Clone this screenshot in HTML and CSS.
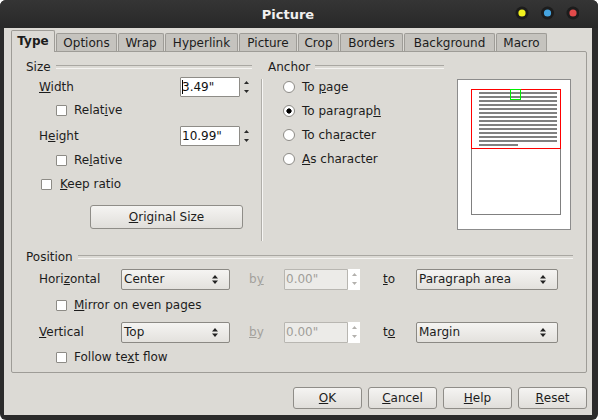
FILE: index.html
```html
<!DOCTYPE html>
<html>
<head>
<meta charset="utf-8">
<title>Picture</title>
<link rel="stylesheet" href="styles.css">
</head>
<body>
<div class="window">
  <div class="titlebar">
    <span></span>
    <span class="title">Picture</span>
    <svg class="controls" width="64" height="14" viewBox="0 0 64 14">
      <circle cx="7" cy="7" r="6.5" fill="#1c1c1c"/>
      <circle cx="7" cy="7" r="3.6" fill="#f2f21e"/>
      <circle cx="32.5" cy="7" r="6.5" fill="#1c1c1c"/>
      <circle cx="32.5" cy="7" r="3.6" fill="#45a4e0"/>
      <circle cx="58" cy="7" r="6.5" fill="#1c1c1c"/>
      <circle cx="58" cy="7" r="3.6" fill="#e24a4a"/>
    </svg>
  </div>
  <div class="dialog">
    <div class="tabs">
      <div class="tab active">Type</div>
      <div class="tab">Options</div>
      <div class="tab">Wrap</div>
      <div class="tab">Hyperlink</div>
      <div class="tab">Picture</div>
      <div class="tab">Crop</div>
      <div class="tab">Borders</div>
      <div class="tab">Background</div>
      <div class="tab">Macro</div>
    </div>
    <div class="panel">
      <div class="top">
        <div class="size">
          <div class="hdr hdr-size">Size</div>
          <div class="row r-width">
            <span class="lbl"><u>W</u>idth</span>
            <div class="spin">
              <div class="field"><span class="caret"></span>3.49"</div>
              <svg class="sarrows" width="5" height="12" viewBox="0 0 5 12"><polygon points="0,3 2.5,0 5,3" fill="#2a2a2a"/><polygon points="0,9 2.5,12 5,9" fill="#2a2a2a"/></svg>
            </div>
          </div>
          <div class="row r-rel1"><span class="cb"></span><span>Relat<u>i</u>ve</span></div>
          <div class="row r-height">
            <span class="lbl">H<u>e</u>ight</span>
            <div class="spin">
              <div class="field">10.99"</div>
              <svg class="sarrows" width="5" height="12" viewBox="0 0 5 12"><polygon points="0,3 2.5,0 5,3" fill="#2a2a2a"/><polygon points="0,9 2.5,12 5,9" fill="#2a2a2a"/></svg>
            </div>
          </div>
          <div class="row r-rel2"><span class="cb"></span><span>Re<u>l</u>ative</span></div>
          <div class="row r-keep"><span class="cb"></span><span><u>K</u>eep ratio</span></div>
          <button class="btn orig"><u>O</u>riginal Size</button>
        </div>
        <div class="sep"></div>
        <div class="anchor">
          <div class="hdr hdr-anchor">Anchor</div>
          <div class="rrow"><span class="rb"></span><span>To <u>p</u>age</span></div>
          <div class="rrow"><span class="rb checked"></span><span>To paragrap<u>h</u></span></div>
          <div class="rrow"><span class="rb"></span><span>To cha<u>r</u>acter</span></div>
          <div class="rrow"><span class="rb"></span><span><u>A</u>s character</span></div>
        </div>
        <svg class="preview" width="114" height="151" viewBox="0 0 114 151">
          <rect x="0.5" y="0.5" width="113" height="150" fill="#ffffff" stroke="#8c8c8c"/>
          <rect x="14.5" y="10.5" width="89" height="125" fill="none" stroke="#808080"/>
          <g fill="#808080">
            <rect x="22" y="13" width="78" height="2"/>
            <rect x="22" y="17" width="78" height="2"/>
            <rect x="22" y="21" width="78" height="2"/>
            <rect x="22" y="25" width="78" height="2"/>
            <rect x="22" y="29" width="78" height="2"/>
            <rect x="22" y="33" width="78" height="2"/>
            <rect x="22" y="37" width="78" height="2"/>
            <rect x="22" y="41" width="78" height="2"/>
            <rect x="22" y="45" width="78" height="2"/>
            <rect x="22" y="49" width="78" height="2"/>
            <rect x="22" y="53" width="78" height="2"/>
            <rect x="22" y="57" width="78" height="2"/>
            <rect x="22" y="61" width="78" height="2"/>
            <rect x="22" y="65" width="39" height="2"/>
          </g>
          <rect x="14.5" y="10.5" width="89" height="59" fill="none" stroke="#ff0000"/>
          <rect x="53.5" y="10.5" width="10" height="10" fill="none" stroke="#00ee00"/>
        </svg>
      </div>
      <div class="position">
        <div class="hdr hdr-pos">Position</div>
        <div class="prow r-h">
          <span class="plbl">Hori<u>z</u>ontal</span>
          <div class="select sel-small"><span>Center</span><svg width="6" height="9" viewBox="0 0 6 9"><polygon points="0,3.5 3,0 6,3.5" fill="#222"/><polygon points="0,5.5 3,9 6,5.5" fill="#222"/></svg></div>
          <span class="by">b<u>y</u></span>
          <div class="dspin"><div class="dfield">0.00"</div><div class="dbtn"><svg width="5" height="12" viewBox="0 0 5 12"><polygon points="0,3 2.5,0 5,3" fill="#b3b1ad"/><polygon points="0,9 2.5,12 5,9" fill="#b3b1ad"/></svg></div></div>
          <span class="to"><u>t</u>o</span>
          <div class="select sel-big"><span>Paragraph area</span><svg width="6" height="9" viewBox="0 0 6 9"><polygon points="0,3.5 3,0 6,3.5" fill="#222"/><polygon points="0,5.5 3,9 6,5.5" fill="#222"/></svg></div>
        </div>
        <div class="prow r-mirror"><span class="cb"></span><span><u>M</u>irror on even pages</span></div>
        <div class="prow r-v">
          <span class="plbl"><u>V</u>ertical</span>
          <div class="select sel-small"><span>Top</span><svg width="6" height="9" viewBox="0 0 6 9"><polygon points="0,3.5 3,0 6,3.5" fill="#222"/><polygon points="0,5.5 3,9 6,5.5" fill="#222"/></svg></div>
          <span class="by"><u>b</u>y</span>
          <div class="dspin"><div class="dfield">0.00"</div><div class="dbtn"><svg width="5" height="12" viewBox="0 0 5 12"><polygon points="0,3 2.5,0 5,3" fill="#b3b1ad"/><polygon points="0,9 2.5,12 5,9" fill="#b3b1ad"/></svg></div></div>
          <span class="to">t<u>o</u></span>
          <div class="select sel-big"><span>Margin</span><svg width="6" height="9" viewBox="0 0 6 9"><polygon points="0,3.5 3,0 6,3.5" fill="#222"/><polygon points="0,5.5 3,9 6,5.5" fill="#222"/></svg></div>
        </div>
        <div class="prow r-follow"><span class="cb"></span><span>Follow te<u>x</u>t flow</span></div>
      </div>
    </div>
    <div class="buttons">
      <button class="btn dbtn-main"><u>O</u>K</button>
      <button class="btn dbtn-main"><u>C</u>ancel</button>
      <button class="btn dbtn-main"><u>H</u>elp</button>
      <button class="btn dbtn-main"><u>R</u>eset</button>
    </div>
  </div>
</div>
</body>
</html>
```

FILE: styles.css
```css
* { box-sizing: border-box; margin: 0; padding: 0; }
html, body { margin: 0; background: #ffffff; }
body {
  font-family: "DejaVu Sans", "Liberation Sans", sans-serif;
  font-size: 12px;
  color: #1c1c1c;
}
u { text-decoration: underline; text-underline-offset: 1px; }

.window {
  width: 598px;
  height: 420px;
  background: #2b2b2b;
  border-radius: 6px;
  padding: 0 6px 5px 4px;
  display: flex;
  flex-direction: column;
  overflow: hidden;
}

.titlebar {
  height: 28px;
  margin: 0 -6px 0 -4px;
  padding-right: 22px;
  display: grid;
  grid-template-columns: 1fr auto 1fr;
  align-items: center;
  background: linear-gradient(#353535, #282828);
}
.title {
  color: #f0f0f0;
  font-weight: bold;
  font-size: 13px;
}
.controls { justify-self: end; margin-right: -3px; margin-top: -2px; }

.dialog {
  flex: 1;
  background: #dcdad5;
  padding: 2px 5px 0 7px;
  display: flex;
  flex-direction: column;
}

.tabs {
  display: flex;
  align-items: flex-end;
  height: 21px;
}
.tab {
  height: 18px;
  border: 1px solid #9e9c97;
  border-bottom: none;
  border-radius: 2px 2px 0 0;
  background: #c5c3be;
  margin-right: 1px;
  display: flex;
  align-items: center;
  justify-content: center;
  white-space: nowrap;
}
.tab:nth-child(1) { width: 44px; }
.tab:nth-child(2) { width: 61px; }
.tab:nth-child(3) { width: 46px; }
.tab:nth-child(4) { width: 73px; }
.tab:nth-child(5) { width: 58px; }
.tab:nth-child(6) { width: 41px; }
.tab:nth-child(7) { width: 63px; }
.tab:nth-child(8) { width: 91px; }
.tab:nth-child(9) { width: 51px; }
.tab.active {
  height: 22px;
  margin-bottom: -1px;
  background: #dcdad5;
  font-weight: bold;
  position: relative;
  z-index: 1;
  padding-bottom: 2px;
}

.panel {
  height: 322px;
  border: 1px solid #9e9c97;
  border-radius: 0 2px 2px 2px;
  display: flex;
  flex-direction: column;
}

.top { display: flex; height: 197px; }

.hdr {
  display: flex;
  align-items: center;
  height: 17px;
  margin-top: 6px;
  white-space: nowrap;
}
.hdr::after {
  content: "";
  flex: 1;
  height: 2px;
  border-top: 1px solid #a9a7a2;
  border-bottom: 1px solid #f4f3f1;
  margin-left: 5px;
}
.hdr-size { padding-left: 14px; margin-right: 9px; }
.hdr-anchor { padding-left: 5px; margin-right: 13px; }
.hdr-pos { padding-left: 14px; margin-right: 13px; margin-top: 0; height: 16px; }

.size { width: 249px; display: flex; flex-direction: column; }
.row { display: flex; align-items: center; white-space: nowrap; }
.lbl { width: 168px; padding-left: 27px; }
.r-width { height: 24px; }
.r-rel1 { height: 22px; padding-left: 44px; }
.r-height { height: 24px; margin-top: 3px; }
.r-rel2 { height: 24px; padding-left: 44px; }
.r-keep { height: 24px; padding-left: 29px; }
.r-keep .cb { margin-right: 8px; }

.spin { display: flex; align-items: center; }
.field {
  width: 60px;
  height: 20px;
  background: #ffffff;
  border: 1px solid #8e8c87;
  border-radius: 1px;
  padding-left: 1px;
  display: flex;
  align-items: center;
  color: #111;
}
.caret {
  display: inline-block;
  width: 1px;
  height: 14px;
  background: #000;
  margin-right: -1px;
}
.sarrows { margin-left: 4px; margin-top: -1px; }

.cb {
  width: 11px;
  height: 11px;
  flex: none;
  background: #ffffff;
  border: 1px solid #8d8b86;
  border-radius: 1px;
  margin-right: 7px;
}

.btn {
  font-family: inherit;
  font-size: 12px;
  color: #1c1c1c;
  border: 1px solid #8f8d88;
  border-radius: 3px;
  background: linear-gradient(#f5f4f2, #e0deda);
  display: flex;
  align-items: center;
  justify-content: center;
}
.orig { width: 153px; height: 24px; margin-left: 78px; margin-top: 9px; }

.sep {
  width: 2px;
  margin-top: 27px;
  height: 162px;
  border-left: 1px solid #b0aea9;
  border-right: 1px solid #f7f6f4;
}

.anchor { width: 194px; display: flex; flex-direction: column; }
.rrow {
  height: 24px;
  display: flex;
  align-items: center;
  padding-left: 20px;
  white-space: nowrap;
}
.rb {
  width: 12px;
  height: 12px;
  flex: none;
  border-radius: 50%;
  border: 1px solid #8d8b86;
  background: #ffffff;
  margin-right: 7px;
}
.rb.checked { background: radial-gradient(circle, #000 0, #000 2.3px, #fff 2.9px); }

.preview { display: block; margin-top: 27px; }

.position { display: flex; flex-direction: column; }
.prow { display: flex; align-items: center; white-space: nowrap; }
.r-h { height: 22px; margin-top: 3px; }
.r-mirror { height: 30px; padding-left: 44px; }
.r-v { height: 22px; margin-top: 1px; }
.r-follow { height: 28px; padding-left: 44px; }
.plbl { width: 109px; padding-left: 27px; }

.select {
  height: 21px;
  border: 1px solid #8b8984;
  border-radius: 2px;
  background: linear-gradient(#f5f4f2, #e3e1dd);
  display: flex;
  align-items: center;
  justify-content: space-between;
  padding: 0 11px 0 2px;
}
.sel-small { width: 109px; }
.sel-big { width: 142px; }

.by { width: 54px; padding-left: 19px; color: #a3a19c; }
.to { width: 56px; padding-left: 23px; }

.dspin { width: 76px; display: flex; height: 21px; }
.dfield {
  width: 64px;
  height: 21px;
  background: #ecebe8;
  border: 1px solid #b8b6b1;
  border-radius: 1px;
  color: #a09e99;
  padding-left: 1px;
  display: flex;
  align-items: center;
}
.dbtn {
  width: 12px;
  height: 21px;
  background: #ffffff;
  display: flex;
  align-items: center;
  justify-content: center;
}

.buttons {
  display: flex;
  justify-content: flex-end;
  gap: 6px;
  margin-top: 14px;
}
.dbtn-main { width: 69px; height: 22px; }
```
